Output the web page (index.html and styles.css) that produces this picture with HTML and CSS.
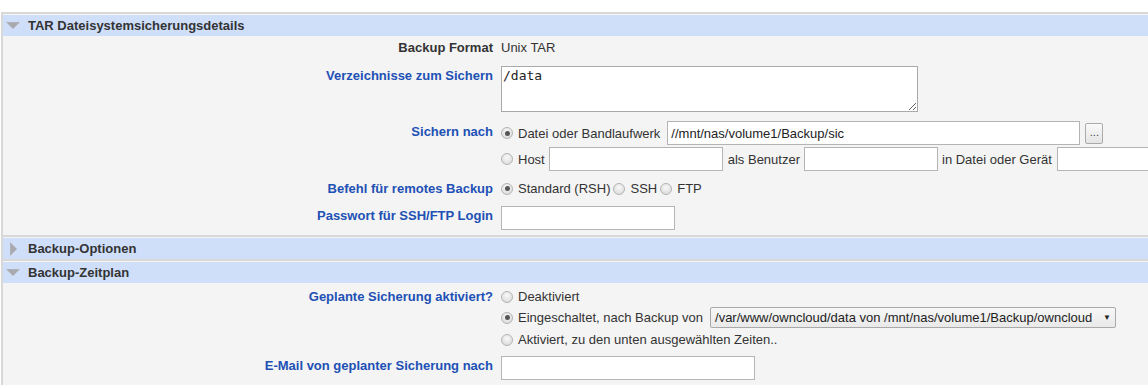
FILE: index.html
```html
<!DOCTYPE html>
<html lang="de">
<head>
  <meta charset="UTF-8">
  <title>TAR Dateisystemsicherungsdetails</title>
  <link rel="stylesheet" href="styles.css">
</head>
<body>

<div class="section">
  <div class="section-head">
    <svg class="arrow down" width="14" height="7" viewBox="0 0 14 7"><polygon points="0,0 14,0 7,7" /></svg>
    TAR Dateisystemsicherungsdetails
  </div>
  <div class="section-body">
    <div class="row r-format">
      <div class="label plain">Backup Format</div>
      <div class="field">Unix TAR</div>
    </div>
    <div class="row r-dirs">
      <div class="label">Verzeichnisse zum Sichern</div>
      <div class="field"><textarea class="dirs">/data</textarea></div>
    </div>
    <div class="row r-dest">
      <div class="label">Sichern nach</div>
      <div class="field">
        <div class="line">
          <span class="radio on"></span><span class="opt">Datei oder Bandlaufwerk</span>
          <input class="text w-file" type="text" value="//mnt/nas/volume1/Backup/sic">
          <button class="pick">...</button>
        </div>
        <div class="line second">
          <span class="radio"></span><span class="opt">Host</span>
          <input class="text w-host" type="text">
          <span class="opt">als Benutzer</span>
          <input class="text w-user" type="text">
          <span class="opt">in Datei oder Gerät</span>
          <input class="text w-dev" type="text">
        </div>
      </div>
    </div>
    <div class="row r-cmd">
      <div class="label">Befehl für remotes Backup</div>
      <div class="field">
        <span class="radio on"></span><span class="opt">Standard (RSH)</span>
        <span class="radio"></span><span class="opt">SSH</span>
        <span class="radio"></span><span class="opt">FTP</span>
      </div>
    </div>
    <div class="row r-pass">
      <div class="label">Passwort für SSH/FTP Login</div>
      <div class="field"><input class="text w-pass" type="password"></div>
    </div>
  </div>
</div>

<div class="section">
  <div class="section-head">
    <svg class="arrow right" width="7" height="14" viewBox="0 0 7 14"><polygon points="0,0 7,7 0,14" /></svg>
    Backup-Optionen
  </div>
</div>

<div class="section">
  <div class="section-head">
    <svg class="arrow down" width="14" height="7" viewBox="0 0 14 7"><polygon points="0,0 14,0 7,7" /></svg>
    Backup-Zeitplan
  </div>
  <div class="section-body">
    <div class="row r-sched">
      <div class="label">Geplante Sicherung aktiviert?</div>
      <div class="field stack">
        <div class="line l-off"><span class="radio"></span><span class="opt">Deaktiviert</span></div>
        <div class="line l-after">
          <span class="radio on"></span><span class="opt">Eingeschaltet, nach Backup von</span>
          <span class="select">/var/www/owncloud/data von /mnt/nas/volume1/Backup/owncloud<span class="caret">▼</span></span>
        </div>
        <div class="line l-times"><span class="radio"></span><span class="opt">Aktiviert, zu den unten ausgewählten Zeiten..</span></div>
      </div>
    </div>
    <div class="row r-mail">
      <div class="label">E-Mail von geplanter Sicherung nach</div>
      <div class="field"><input class="text w-mail" type="text"></div>
    </div>
  </div>
</div>

</body>
</html>
```

FILE: styles.css
```css
body {
  margin: 0;
  padding: 12px 0 0 1px;
  background: #fff;
  font-family: "Liberation Sans", Arial, sans-serif;
  font-size: 13px;
  color: #333;
  width: 1300px;
  overflow: hidden;
}

.section {
  border-top: 2px solid #d8d8d8;
  border-left: 2px solid #d8d8d8;
  padding-top: 1px;
  background: #f4f4f4;
}

.section-head {
  display: flex;
  align-items: center;
  height: 21px;
  background: #cfdffa;
  font-weight: bold;
  color: #333;
}

.arrow {
  fill: #a9a9b0;
  stroke: #c4c4cc;
  stroke-width: 0.6;
}

.arrow.down {
  margin: 0 8px 0 3px;
}

.arrow.right {
  margin: 0 11px 0 7px;
}

.section-body {
  padding-bottom: 5px;
}

.row {
  display: flex;
  align-items: flex-start;
}

.label {
  width: 490px;
  flex: none;
  text-align: right;
  font-weight: bold;
  color: #2150b5;
  line-height: 15px;
}

.label.plain {
  color: #333;
}

.field {
  margin-left: 8px;
  line-height: 15px;
}

.line {
  display: flex;
  align-items: center;
  height: 24px;
}

.line.second {
  margin-top: 2px;
}

.r-format { margin-top: 4px; }
.r-dirs { margin-top: 11px; }
.r-dirs .label { padding-top: 2px; }
.r-dest { margin-top: 9px; }
.r-dest .label { padding-top: 3px; }
.r-cmd { margin-top: 10px; }
.r-cmd .field { display: flex; align-items: center; }
.r-pass { margin-top: 10px; }
.r-pass .label { padding-top: 2px; }

.r-sched { margin-top: 6px; }
.r-mail { margin-top: 9px; }
.r-mail .label { padding-top: 2px; }

textarea.dirs {
  display: block;
  box-sizing: border-box;
  width: 417px;
  height: 46px;
  margin: 0;
  padding: 1px 1px;
  border: 1px solid #a9a9a9;
  background: #fff;
  font-family: "DejaVu Sans Mono", monospace;
  font-size: 13px;
  color: #222;
  resize: both;
}

input.text {
  box-sizing: border-box;
  height: 24px;
  margin: 0;
  padding: 1px 3px;
  border: 1px solid #b4b4b4;
  background: #fff;
  font-family: "Liberation Sans", Arial, sans-serif;
  font-size: 13px;
  color: #222;
}

.w-file { width: 413px; margin-left: 7px !important; }
.w-host { width: 174px; margin-left: 4px !important; }
.w-user { width: 134px; margin: 0 4px !important; }
.w-dev { width: 140px; margin-left: 5px !important; }
.w-pass { width: 174px; }
.w-mail { width: 254px; }

.opt {
  white-space: nowrap;
}

.line.second .w-host + .opt { margin-left: 5px; }

.radio {
  display: inline-block;
  flex: none;
  box-sizing: border-box;
  width: 12px;
  height: 12px;
  margin: 0 5px 0 0;
  border-radius: 50%;
  border: 1px solid #b4b4b4;
  background: radial-gradient(circle at 50% 35%, #f8f8f8 0, #e4e4e4 60%, #d2d2d2 100%);
  position: relative;
}

.radio.on::after {
  content: "";
  position: absolute;
  left: 2.5px;
  top: 2.5px;
  width: 5px;
  height: 5px;
  border-radius: 50%;
  background: #555;
}

.r-cmd .opt + .radio { margin-left: 3px; }

button.pick {
  box-sizing: border-box;
  width: 18px;
  height: 21px;
  margin-left: 5px;
  padding: 0 0 3px 0;
  border: 1px solid #aaa;
  border-radius: 2px;
  background: linear-gradient(#fafafa, #e4e4e4);
  font-family: "Liberation Sans", Arial, sans-serif;
  font-size: 11px;
  color: #444;
  line-height: 10px;
}

.stack .line {
  height: 15px;
}

.stack .line.l-after {
  height: 21px;
  margin-top: 3px;
}

.stack .line.l-times {
  margin-top: 4px;
}

.select {
  display: inline-flex;
  align-items: center;
  justify-content: space-between;
  box-sizing: border-box;
  width: 406px;
  height: 21px;
  margin-left: 7px;
  padding: 0 4px;
  border: 1px solid #a9a9a9;
  border-radius: 2px;
  background: linear-gradient(#f7f7f7, #e9e9e9);
  color: #222;
  white-space: nowrap;
}

.caret {
  font-size: 8px;
  color: #222;
}
```
